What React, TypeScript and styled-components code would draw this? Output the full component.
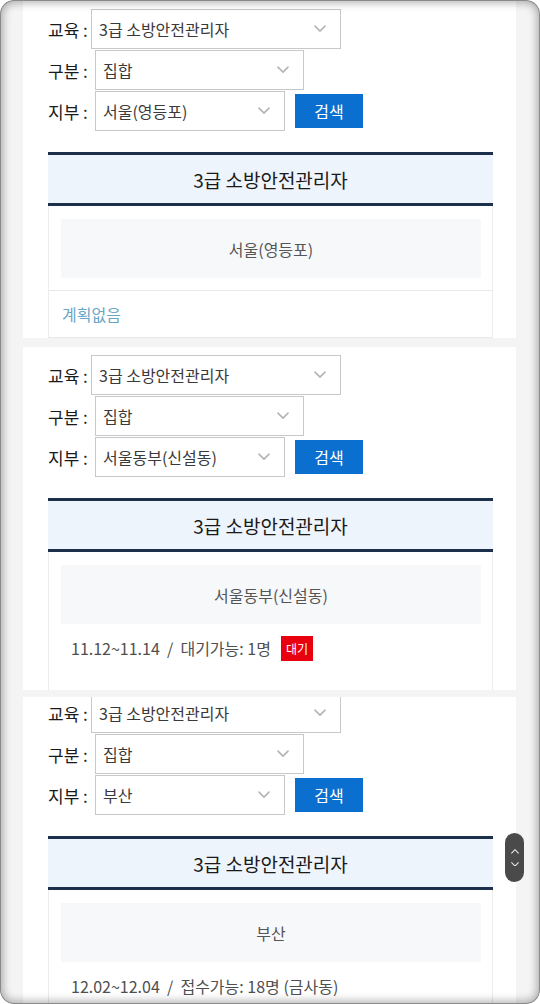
import React from "react";
import styled, { createGlobalStyle } from "styled-components";

const Global = createGlobalStyle`
  html, body { margin: 0; padding: 0; background: #ffffff; }
  body { font-family: "Noto Sans CJK KR", "Noto Sans", sans-serif; }
  * { box-sizing: border-box; }
`;

const Frame = styled.div`
  position: relative;
  width: 540px;
  height: 1004px;
  border-radius: 14px;
  overflow: hidden;
  background: #f4f4f4;
  display: flex;
  flex-direction: column;
  &::after {
    content: "";
    position: absolute;
    inset: 0;
    border-radius: 14px;
    pointer-events: none;
    box-shadow: inset 0 0 0 1px #8a8a8a, inset 0 0 8px 3px rgba(0, 0, 0, 0.3);
  }
`;

const Panel = styled.section<{ $top: number; $height: number; $pad: number }>`
  margin: ${(p) => p.$top}px 24px 0 23px;
  height: ${(p) => p.$height}px;
  padding: ${(p) => p.$pad}px 0 0 25px;
  background: #ffffff;
  overflow: hidden;
  flex-shrink: 0;
  display: flex;
  flex-direction: column;
`;

const Form = styled.div<{ $shift: number }>`
  display: flex;
  flex-direction: column;
  gap: 1px;
  margin-top: ${(p) => p.$shift}px;
`;

const Row = styled.div`
  display: flex;
  align-items: center;
  height: 40px;
`;

const Label = styled.span<{ $w: number }>`
  width: ${(p) => p.$w}px;
  font-size: 17px;
  color: #1a1a1a;
  white-space: nowrap;
`;

const Select = styled.div<{ $w: number }>`
  width: ${(p) => p.$w}px;
  height: 40px;
  border: 1px solid #c8c8c8;
  background: #fff;
  display: flex;
  align-items: center;
  justify-content: space-between;
  padding: 0 14px 0 7px;
  font-size: 16px;
  color: #3a3a3a;
`;

const Button = styled.button`
  margin-left: 10px;
  width: 68px;
  height: 34px;
  border: none;
  background: #0b6fcf;
  color: #fff;
  font-family: inherit;
  font-size: 16px;
  padding: 0;
`;

const Table = styled.div`
  width: 445px;
  margin-top: 21px;
  flex: 1;
  display: flex;
  flex-direction: column;
`;

const Head = styled.div`
  height: 54px;
  flex-shrink: 0;
  border-top: 3px solid #1c2f4b;
  border-bottom: 3px solid #1c2f4b;
  background: #eef4fb;
  display: flex;
  align-items: center;
  justify-content: center;
  font-size: 19px;
  color: #1a1a1a;
`;

const Body = styled.div<{ $fill: boolean }>`
  flex: ${(p) => (p.$fill ? 1 : "none")};
  border-left: 1px solid #ececec;
  border-right: 1px solid #ececec;
  display: flex;
  flex-direction: column;
`;

const Place = styled.div`
  margin: 13px 11px 0 12px;
  height: 59px;
  background: #f6f8fa;
  display: flex;
  align-items: center;
  justify-content: center;
  font-size: 16px;
  color: #555;
`;

const Empty = styled.div`
  margin-top: 12px;
  height: 48px;
  border-top: 1px solid #e8e8e8;
  border-bottom: 1px solid #e8e8e8;
  display: flex;
  align-items: center;
  padding-left: 13px;
  font-size: 16px;
  color: #6aa6c6;
`;

const Schedule = styled.div`
  margin-top: 12px;
  height: 24px;
  display: flex;
  align-items: center;
  padding-left: 22px;
  font-size: 16px;
  color: #4f4f4f;
  white-space: pre;
`;

const Badge = styled.span`
  margin-left: 10px;
  height: 25px;
  padding: 0 5px;
  background: #e8000f;
  color: #fff;
  font-size: 12px;
  display: inline-flex;
  align-items: center;
`;

const Pill = styled.div`
  position: absolute;
  left: 505px;
  top: 833px;
  width: 19px;
  height: 49px;
  border-radius: 10px;
  background: #4a4a4a;
  display: flex;
  flex-direction: column;
  align-items: center;
  justify-content: center;
  gap: 8px;
  z-index: 2;
`;

const Chevron = ({ up, size = 12, color = "#b5b5b5" }: { up?: boolean; size?: number; color?: string }) => (
  <svg width={size} height={size * 0.6} viewBox="0 0 12 7" fill="none">
    <path
      d={up ? "M1 6 L6 1 L11 6" : "M1 1 L6 6 L11 1"}
      stroke={color}
      strokeWidth="1.6"
      strokeLinecap="round"
      strokeLinejoin="round"
    />
  </svg>
);

type Data = {
  branch: string;
  schedule?: { text: string; badge?: string };
};

const SearchForm = ({ branch, shift }: { branch: string; shift: number }) => (
  <Form $shift={shift}>
    <Row>
      <Label $w={43}>교육 :</Label>
      <Select $w={250}>
        <span>3급 소방안전관리자</span>
        <Chevron />
      </Select>
    </Row>
    <Row>
      <Label $w={47}>구분 :</Label>
      <Select $w={209}>
        <span>집합</span>
        <Chevron />
      </Select>
    </Row>
    <Row>
      <Label $w={47}>지부 :</Label>
      <Select $w={190}>
        <span>{branch}</span>
        <Chevron />
      </Select>
      <Button>검색</Button>
    </Row>
  </Form>
);

const Result = ({ branch, schedule }: Data) => (
  <Table>
    <Head>3급 소방안전관리자</Head>
    <Body $fill={!!schedule}>
      <Place>{branch}</Place>
      {schedule ? (
        <Schedule>
          {schedule.text}
          {schedule.badge && <Badge>{schedule.badge}</Badge>}
        </Schedule>
      ) : (
        <Empty>계획없음</Empty>
      )}
    </Body>
  </Table>
);

export default function App() {
  return (
    <>
      <Global />
      <Frame>
        <Panel $top={0} $height={338} $pad={9}>
          <SearchForm branch="서울(영등포)" shift={0} />
          <Result branch="서울(영등포)" />
        </Panel>
        <Panel $top={9} $height={343} $pad={8}>
          <SearchForm branch="서울동부(신설동)" shift={0} />
          <Result
            branch="서울동부(신설동)"
            schedule={{ text: "11.12~11.14  /  대기가능: 1명", badge: "대기" }}
          />
        </Panel>
        <Panel $top={7} $height={307} $pad={0}>
          <SearchForm branch="부산" shift={-4} />
          <Result branch="부산" schedule={{ text: "12.02~12.04  /  접수가능: 18명 (금사동)" }} />
        </Panel>
        <Pill>
          <Chevron up size={8} color="#e8e8e8" />
          <Chevron size={8} color="#e8e8e8" />
        </Pill>
      </Frame>
    </>
  );
}
